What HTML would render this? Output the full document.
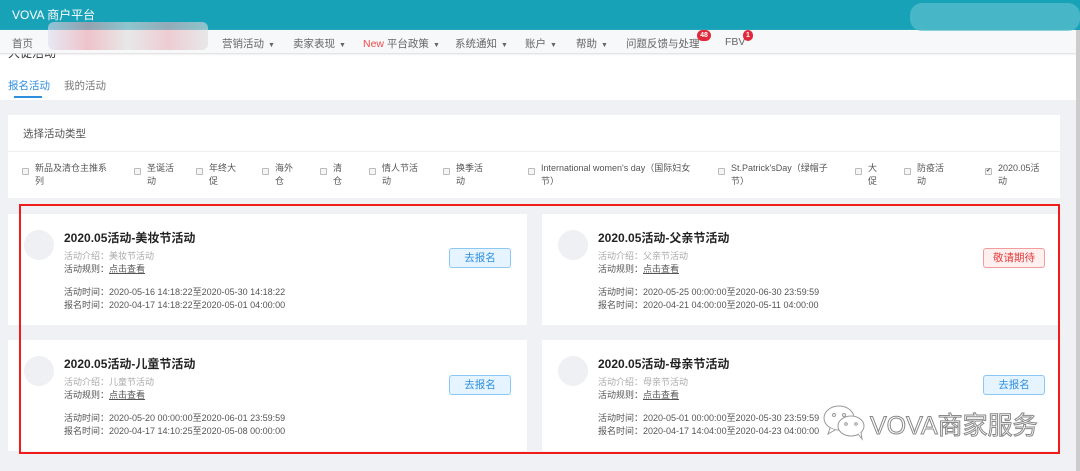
<!DOCTYPE html><html><head><meta charset="utf-8"><style>
*{margin:0;padding:0;box-sizing:border-box}
body{width:1080px;height:471px;overflow:hidden;background:#f0f1f5;font-family:"Liberation Sans","Noto Sans CJK SC",sans-serif;position:relative;font-size:10px;color:#333}
.a{position:absolute}
.hdr{left:0;top:0;width:1080px;height:30px;background:#18a2b8}
.nav{left:0;top:30px;width:1076px;height:23px;background:#f7f8fa;box-shadow:0 1px 2px #ddd;font-size:10.5px;color:#666}
.nav span{position:absolute;top:6px;white-space:nowrap}
.car{font-size:7px;margin-left:4px}
.badge{position:absolute;background:#e0293a;color:#fff;font-size:7px;font-weight:bold;border-radius:6px;height:11px;line-height:11px;text-align:center}
.card{background:#fff;width:519px;height:111px}
.circ{left:16px;top:16px;width:30px;height:30px;border-radius:50%;background:#eff0f4}
.t{left:56px;top:15px;font-size:12px;font-weight:bold;color:#222}
.l{left:56px;font-size:9px;color:#555;white-space:nowrap}
.btn{width:62px;height:20px;border-radius:3px;font-size:10.5px;text-align:center;line-height:18px}
.blue{background:#e6f4ff;border:1px solid #8cc8f5;color:#2e8fdf}
.red{background:#fff0f0;border:1px solid #f29c9c;color:#e23c3c}
.cb{position:absolute;font-size:9px;color:#555;line-height:13px}
.cb i{position:absolute;left:-13px;top:6px;width:7px;height:7px;border:1px solid #bbb;border-radius:1px;background:#f5f5f5}
</style></head><body>
<div class="a hdr"></div>
<div class="a" style="left:12px;top:6px;color:#fff;font-size:12px">VOVA 商户平台</div>
<div class="a" style="left:0;top:54px;width:1076px;height:46px;background:#fff"></div>
<div class="a" style="left:8px;top:44px;font-size:12px;color:#333">大促活动</div>
<div class="a nav">
<span style="left:12px">首页</span>
<span style="left:222px">营销活动<span class="car">▼</span></span>
<span style="left:293px">卖家表现<span class="car">▼</span></span>
<span style="left:363px"><b style="color:#f04c4c;font-weight:normal">New</b> 平台政策<span class="car">▼</span></span>
<span style="left:455px">系统通知<span class="car">▼</span></span>
<span style="left:525px">账户<span class="car">▼</span></span>
<span style="left:576px">帮助<span class="car">▼</span></span>
<span style="left:626px">问题反馈与处理</span>
<span style="left:725px">FBV</span>
</div>
<div class="a" style="left:48px;top:22px;width:160px;height:28px;background:linear-gradient(90deg,#dde,#e8a0aa,#ddd,#e6b0b8,#ddd);opacity:.6;border-radius:6px"></div>
<div class="a" style="left:910px;top:3px;width:170px;height:28px;border-radius:12px;background:#5bbfcc;opacity:.7"></div>
<div class="badge a" style="left:697px;top:30px;width:14px">48</div>
<div class="badge a" style="left:743px;top:30px;width:10px">1</div>
<div class="a" style="left:8px;top:78px;font-size:10.5px;color:#2e8fdf">报名活动</div>
<div class="a" style="left:14px;top:96px;width:28px;height:2px;background:#2e8fdf"></div>
<div class="a" style="left:64px;top:78px;font-size:10.5px;color:#777">我的活动</div>
<div class="a" style="left:8px;top:115px;width:1052px;height:83px;background:#fff"></div>
<div class="a" style="left:8px;top:151px;width:1052px;height:1px;background:#eee"></div>
<div class="a" style="left:23px;top:126px;font-size:10.5px;color:#555">选择活动类型</div>
<div class="cb" style="left:35px;top:162px"><i></i>新品及清仓主推系<br>列</div>
<div class="cb" style="left:147px;top:162px"><i></i>圣诞活<br>动</div>
<div class="cb" style="left:209px;top:162px"><i></i>年终大<br>促</div>
<div class="cb" style="left:275px;top:162px"><i></i>海外<br>仓</div>
<div class="cb" style="left:333px;top:162px"><i></i>清<br>仓</div>
<div class="cb" style="left:382px;top:162px"><i></i>情人节活<br>动</div>
<div class="cb" style="left:456px;top:162px"><i></i>换季活<br>动</div>
<div class="cb" style="left:541px;top:162px"><i></i>International women's day（国际妇女<br>节）</div>
<div class="cb" style="left:731px;top:162px"><i></i>St.Patrick'sDay（绿帽子<br>节）</div>
<div class="cb" style="left:868px;top:162px"><i></i>大<br>促</div>
<div class="cb" style="left:917px;top:162px"><i></i>防疫活<br>动</div>
<div class="cb" style="left:998px;top:162px"><i style="font-style:normal;font-size:6px;line-height:5px;text-align:center">✔</i>2020.05活<br>动</div>

<div class="a card" style="left:8px;top:214px"><div class="a circ"></div><div class="a t">2020.05活动-美妆节活动</div><div class="a l" style="top:35px;color:#aaa">活动介绍：美妆节活动</div><div class="a l" style="top:48px">活动规则：<u>点击查看</u></div><div class="a l" style="top:71px">活动时间：2020-05-16 14:18:22至2020-05-30 14:18:22</div><div class="a l" style="top:84px">报名时间：2020-04-17 14:18:22至2020-05-01 04:00:00</div><div class="a btn blue" style="left:441px;top:34px">去报名</div></div>
<div class="a card" style="left:542px;top:214px;width:516px"><div class="a circ"></div><div class="a t">2020.05活动-父亲节活动</div><div class="a l" style="top:35px;color:#aaa">活动介绍：父亲节活动</div><div class="a l" style="top:48px">活动规则：<u>点击查看</u></div><div class="a l" style="top:71px">活动时间：2020-05-25 00:00:00至2020-06-30 23:59:59</div><div class="a l" style="top:84px">报名时间：2020-04-21 04:00:00至2020-05-11 04:00:00</div><div class="a btn red" style="left:441px;top:34px">敬请期待</div></div>
<div class="a card" style="left:8px;top:340px"><div class="a circ"></div><div class="a t">2020.05活动-儿童节活动</div><div class="a l" style="top:35px;color:#aaa">活动介绍：儿童节活动</div><div class="a l" style="top:48px">活动规则：<u>点击查看</u></div><div class="a l" style="top:71px">活动时间：2020-05-20 00:00:00至2020-06-01 23:59:59</div><div class="a l" style="top:84px">报名时间：2020-04-17 14:10:25至2020-05-08 00:00:00</div><div class="a btn blue" style="left:441px;top:35px">去报名</div></div>
<div class="a card" style="left:542px;top:340px;width:516px"><div class="a circ"></div><div class="a t">2020.05活动-母亲节活动</div><div class="a l" style="top:35px;color:#aaa">活动介绍：母亲节活动</div><div class="a l" style="top:48px">活动规则：<u>点击查看</u></div><div class="a l" style="top:71px">活动时间：2020-05-01 00:00:00至2020-05-30 23:59:59</div><div class="a l" style="top:84px">报名时间：2020-04-17 14:04:00至2020-04-23 04:00:00</div><div class="a btn blue" style="left:441px;top:35px">去报名</div></div>
<div class="a" style="left:19px;top:204px;width:1041px;height:250px;border:2px solid #f01c1c"></div>
<svg class="a" style="left:822px;top:405px" width="46" height="36" viewBox="0 0 46 36" fill="#fff" stroke="#999" stroke-width="1"><ellipse cx="17" cy="13" rx="15" ry="12"/><path d="M8 23 l-2 6 l7 -4"/><ellipse cx="29" cy="21" rx="13" ry="10"/><path d="M36 29 l4 5 l-1 -7"/><circle cx="12" cy="10" r="1.5"/><circle cx="22" cy="10" r="1.5"/><circle cx="24" cy="19" r="1.3"/><circle cx="34" cy="19" r="1.3"/></svg>
<div class="a" style="left:870px;top:406px;font-size:25px;color:#fff;-webkit-text-stroke:1px #888;white-space:nowrap">VOVA商家服务</div>
<div class="a" style="left:1076px;top:30px;width:4px;height:441px;background:#ccc"></div>
</body></html>
